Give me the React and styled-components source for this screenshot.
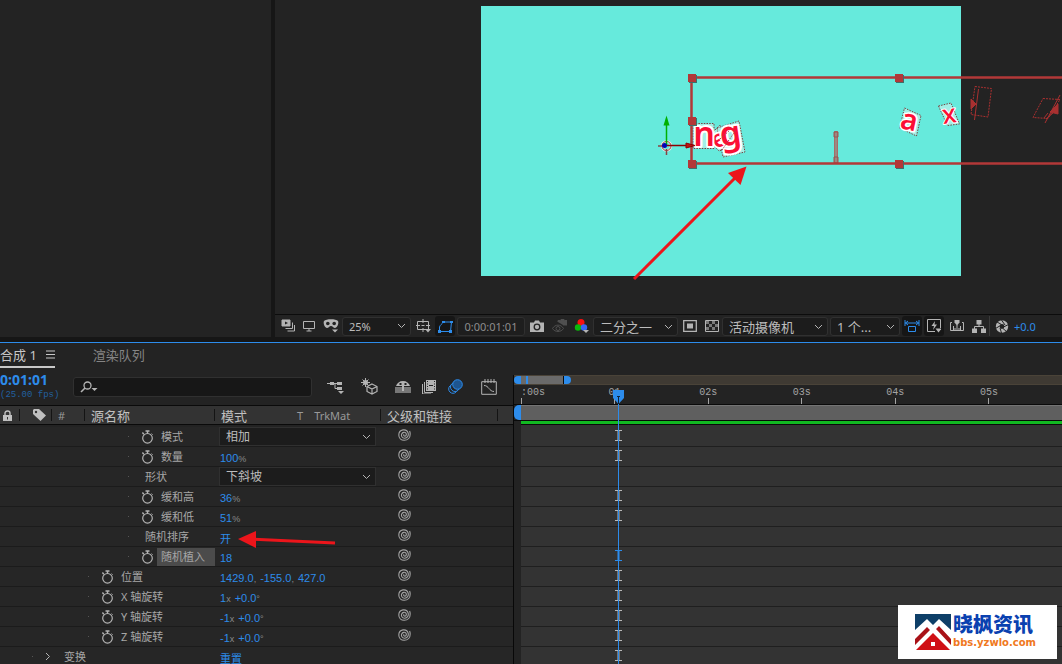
import React, { useState } from 'react';
import styled, { createGlobalStyle, css } from 'styled-components';

const GlobalStyle = createGlobalStyle`
  * {
    box-sizing: border-box;
  }
  body {
    margin: 0;
    background: #161616;
    color: #b4b4b4;
    font-family: "Noto Sans", "Noto Sans CJK SC", sans-serif;
    font-size: 11px;
    overflow: hidden;
  }
  button, input, select {
    font: inherit;
    color: inherit;
    border: 0;
    padding: 0;
    margin: 0;
    background: none;
  }
`;

const Page = styled.div`
  display: flex;
  flex-direction: column;
  height: 100vh;
  overflow: hidden;
`;

const TopArea = styled.div`
  display: grid;
  grid-template-columns: 271px minmax(0, 1fr);
  column-gap: 4px;
  flex: none;
  margin-bottom: 5px;
`;

const Panel = styled.section`
  background: #232323;
  min-width: 0;
`;

const Stage = styled.div`
  display: flex;
  overflow: hidden;
  border-bottom: 1px solid #0c0c0c;

  svg {
    flex: none;
  }
`;

const Toolbar = styled.div`
  display: flex;
  align-items: center;
  height: 22px;
  padding-left: 3px;
`;

const IconButton = styled.button`
  display: flex;
  align-items: center;
  justify-content: center;
  flex: none;
  width: ${p => p.$w || 24}px;
  height: 20px;
  color: ${p => (p.$on ? '#2d8ceb' : '#b4b4b4')};
  opacity: ${p => (p.$dim ? 0.3 : 1)};
  ${p => p.$boxed && css`
    background: #161616;
    border-radius: 3px;
    margin-right: 2px;
  `}
`;

const TimeField = styled.input`
  width: 68px;
  height: 19px;
  flex: none;
  text-align: center;
  color: #8d8d8d;
  background: #1e1e1e;
  border: 1px solid #303030;
  border-radius: 3px;
`;

const SelectBox = styled.span`
  display: grid;
  grid-template-columns: minmax(0, 1fr) 13px;
  align-items: center;
  flex: none;
  width: ${p => p.$w}px;
  height: ${p => p.$h || 19}px;
  margin-right: ${p => p.$mr || 0}px;
  background: #1c1c1c;
  border: 1px solid #303030;
  border-radius: ${p => (p.$h ? 0 : 3)}px;

  select {
    grid-area: 1 / 1 / 2 / 3;
    appearance: none;
    width: 100%;
    height: 100%;
    padding-left: 6px;
    font-size: ${p => p.$size || 13}px;
    color: #bcbcbc;
    outline: none;
  }
  svg {
    grid-area: 1 / 2;
    pointer-events: none;
  }
`;

const Divider = styled.span`
  width: 1px;
  height: 20px;
  background: #3a3a3a;
`;

const Exposure = styled.a`
  color: #2d8ceb;
  text-decoration: none;
`;

const Timeline = styled.section`
  display: grid;
  grid-template-columns: 513px minmax(0, 1fr);
  flex: 1;
  min-height: 0;
  position: relative;
  border-top: 1px solid #2d8ceb;
  background: #232323;
`;

const Outline = styled.div`
  display: flex;
  flex-direction: column;
  min-width: 0;
`;

const Tabs = styled.div`
  display: flex;
  height: 25px;
  font-size: 13px;
`;

const Tab = styled.button`
  display: flex;
  align-items: center;
  gap: 9px;
  white-space: nowrap;
  margin-right: 38px;
  color: ${p => (p.$active ? '#c8c8c8' : '#858585')};
  border-bottom: 2px solid ${p => (p.$active ? '#c8c8c8' : 'transparent')};
`;

const Controls = styled.div`
  display: flex;
  align-items: center;
  height: 37px;
`;

const Clock = styled.div`
  width: 73px;
  flex: none;
  line-height: 16px;
  font-size: 14px;
  font-weight: 700;
  color: #2d8ceb;
  white-space: nowrap;

  small {
    display: block;
    font: 9px/14px "Liberation Mono", monospace;
    color: #22609f;
  }
`;

const Search = styled.label`
  display: flex;
  align-items: center;
  flex: none;
  width: 239px;
  height: 20px;
  margin-right: 6px;
  padding-left: 6px;
  background: #171717;
  border: 1px solid #303030;
  border-radius: 3px;

  input {
    flex: 1;
    min-width: 0;
    outline: none;
  }
`;

const Head = styled.div`
  display: grid;
  grid-template-columns: 20px 32px 33px 130px 166px 117px 1fr;
  align-items: center;
  height: 20px;
  background: #333;
  border-top: 1px solid #0a0a0a;
  border-bottom: 1px solid #0a0a0a;
`;

const HeadCell = styled.div`
  display: flex;
  align-items: center;
  height: 12px;
  padding-left: ${p => p.$pad || 6}px;
  border-right: 1px solid #141414;
  font-size: 13px;
  color: #c0c0c0;
  white-space: nowrap;
`;

const HeadNote = styled.span`
  margin-left: ${p => p.$gap || 0}px;
  font-size: 11px;
  color: #999;
`;

const Rows = styled.div`
  padding-top: 1px;
  border-top: 1px solid #232323;
`;

const Row = styled.div`
  display: grid;
  grid-template-columns: 219px 161px 1fr;
  align-items: center;
  height: 20px;
  background: #262626;
  border-bottom: 1px solid #1b1b1b;
`;

const NameCell = styled.div`
  display: flex;
  align-items: center;
  padding-left: ${p => p.$indent}px;

  &::before {
    content: "";
    width: 1px;
    height: 1px;
    margin-right: 12px;
    background: #555;
  }
  svg {
    margin-right: 3px;
  }
`;

const Name = styled.span`
  line-height: 18px;
  padding: 0 ${p => (p.$selected ? 10 : 4)}px 0 4px;
  background: ${p => (p.$selected ? '#4b4b4b' : 'transparent')};
  color: #a6a6a6;
  white-space: nowrap;
`;

const Value = styled.button`
  justify-self: start;
  margin-left: 1px;
  padding-top: 2px;
  font: 11px "Liberation Sans", "Noto Sans CJK SC", sans-serif;
  color: #2d8ceb;
  white-space: nowrap;
  text-decoration: ${p => (p.$link ? 'underline' : 'none')};
`;

const Unit = styled.span`
  margin-right: ${p => (p.$gap ? 4 : 0)}px;
  font-size: 9px;
  color: #8a8a8a;
`;

const PickWhip = styled.button`
  display: flex;
  justify-self: start;
  margin-left: 18px;
  padding-bottom: 3px;
  color: #a4a4a4;
`;

const TimePane = styled.div`
  position: relative;
  min-width: 0;
  overflow: hidden;
  margin-top: 32px;
  border-left: 1px solid #080808;
`;

const Navigator = styled.div`
  display: flex;
  height: 10px;
  background: #3f3a33;
  border-top: 1px solid #4a4338;
  border-bottom: 1px solid #4a4338;
`;

const Grip = styled.span`
  width: 7px;
  background: #2d8ceb;
  border-radius: ${p => (p.$end ? '0 5px 5px 0' : '5px 0 0 5px')};
`;

const Thumb = styled.span`
  width: 43px;
  padding-left: 5px;
  background: #6a6a6a;
  border-right: 1px solid #0a0a0a;

  &::before {
    content: "";
    display: block;
    width: 2px;
    height: 100%;
    background: #2d8ceb;
  }
`;

const Ruler = styled.div`
  display: flex;
  height: 19px;
  padding-left: 7px;
  font: 10px "Liberation Mono", monospace;
  color: #a4a4a4;
`;

const Mark = styled.div`
  display: flex;
  flex-direction: column;
  align-items: ${p => (p.$first ? 'flex-start' : 'center')};
  justify-content: flex-end;
  flex: 0 0 ${p => (p.$first ? '8.65%' : '17.3%')};
  line-height: 11px;

  &::after {
    content: "";
    width: 1px;
    height: 6px;
    background: #a4a4a4;
  }
`;

const WorkArea = styled.div`
  display: flex;
  height: 17px;
  border-top: 1px solid #0a0a0a;
  border-bottom: 1px solid #0a0a0a;
`;

const WorkBar = styled.div`
  flex: 1;
  background: #5f5f5f;
  border-top: 1px solid #747474;
`;

const Cached = styled.div`
  height: 4px;
  margin-left: 7px;
  background: #12b922;
  border-bottom: 1px solid #0a0a0a;
`;

const Tracks = styled.div`
  margin-left: 7px;
  padding-top: 2px;
  background: #333;
`;

const Track = styled.div`
  display: flex;
  align-items: center;
  height: 20px;
  padding: 0 0 2px 94px;
  color: ${p => (p.$active ? '#2d8ceb' : '#b8b8b8')};
  border-bottom: 1px solid #1f1f1f;
`;

const Playhead = styled.div`
  position: absolute;
  left: 99px;
  top: 15px;
  bottom: 0;
  display: flex;
  flex-direction: column;
  align-items: center;
  width: 11px;

  &::after {
    content: "";
    flex: 1;
    width: 1px;
    background: #2d8ceb;
  }
`;

const Pointer = styled.svg`
  position: absolute;
  left: 236px;
  top: 186px;
`;

const Badge = styled.a`
  position: fixed;
  right: 5px;
  bottom: 5px;
  display: flex;
  align-items: center;
  gap: 2px;
  width: 159px;
  height: 54px;
  padding-left: 17px;
  background: #fff;
  text-decoration: none;
  white-space: nowrap;
`;

const BadgeText = styled.span`
  display: grid;
  grid-template-rows: 22px 16px;
  align-items: center;
`;

const BadgeName = styled.strong`
  font: 900 20px/20px "Noto Sans CJK SC", sans-serif;
  color: #0a41b0;
`;

const BadgeSite = styled.span`
  font: bold 10px/12px "DejaVu Sans", sans-serif;
  color: #f07820;
`;

const Icon = ({ w = 14, h = 14, children }) => (
  <svg width={w} height={h} viewBox={`0 0 ${w} ${h}`} fill="none" stroke="currentColor" aria-hidden="true">
    {children}
  </svg>
);

const Chevron = () => (
  <Icon w={9} h={6}><path d="M1 1l3.5 3.5L8 1" /></Icon>
);

const Stopwatch = () => (
  <Icon w={13} h={14}>
    <circle cx="6.5" cy="8.3" r="4.8" strokeWidth="1.2" />
    <path d="M6.5 3.5V1.2M4.5 1h4M1.4 2.5l1.4 1.7" strokeWidth="1.4" />
    <path d="M10.6 3.6l1 1" />
  </Icon>
);

const Spiral = () => (
  <Icon w={13} h={12}>
    <path
      d="M6.200 5.500c-.9.3-.6 1.600.4 1.600 1.500 0 2.200-1.600 1.400-2.800C7 2.800 4.500 3 3.700 5c-.8 2.300.8 4.300 3 4.200 2.600-.1 4-2.400 3.500-4.800C9.600 1.800 7.300.6 5 .9 2.500 1.300.8 3.500.8 6c0 3 2.300 5.300 5.400 5.300 3.800 0 6-2.800 6-6.300 0-1-.2-2-.6-3"
      strokeWidth="1.100"
    />
  </Icon>
);

const IBeam = () => (
  <Icon w={7} h={11}><path d="M0 .5h7M0 10.500h7M3.500 1v9" strokeWidth="1" /><path d="M3.500 1v9" strokeWidth="3" opacity=".5" /></Icon>
);

const Select = ({ label, options, size, ...box }) => (
  <SelectBox $size={size} {...box}>
    <select aria-label={label}>
      {options.map(o => <option key={o}>{o}</option>)}
    </select>
    <Chevron />
  </SelectBox>
);

function Composition() {
  const handles = [[692, 78], [899, 78], [692, 121], [692, 164], [899, 164]];
  return (
    <svg width="787" height="314" viewBox="275 0 787 314" role="img" aria-label="合成 1">
      <rect x="481" y="6" width="480" height="270" fill="#66eadc" />

      <g fill="#a4efe6" stroke="#75423f" strokeDasharray="1.500 1.200">
        <path d="M693 123.500h21v25h-21z" />
        <path d="M711 134l9-9 9 9-2 14-8 3-8-8z" />
        <path d="M717 128l22-7 6 31-22 5z" />
        <path d="M904.500 108l16.500 7.500-4.500 20.500-17-8z" />
        <path d="M938.500 106l12.500-3 8.500 21-12 1.500z" />
      </g>
      <g fill="#fb0f35" stroke="#fff" strokeWidth="4" strokeLinejoin="round" paintOrder="stroke" fontFamily="Noto Sans, sans-serif" fontWeight="600" textAnchor="middle">
        <text x="719" y="147" fontSize="24" transform="rotate(-30 719 140)">e</text>
        <text x="704" y="146" fontSize="34">n</text>
        <text x="731" y="145" fontSize="34" transform="rotate(-8 731 140)">g</text>
        <text x="909" y="130" fontSize="29" strokeWidth="3" transform="rotate(12 909 122)">a</text>
        <text x="949" y="123" fontSize="26" strokeWidth="2" fontWeight="500" transform="rotate(-8 949 114)">x</text>
      </g>
      <path d="M720 139l10-9M722 150l14-20" stroke="#a04a48" strokeDasharray="1.500 1.200" />

      <g stroke="#a93030" fill="none">
        <path d="M834.500 131.500h3v32h-3z" stroke="#a36f6a" fill="#9c8882" />
        <path d="M834 132h4v5h-4zM834 157h4v6h-4z" stroke="#9a5551" />
        <path d="M975 86.500l16.500 2-3.500 28.500-17-2.500z" strokeDasharray="2 1" />
        <path d="M978.500 89l-4 31" />
        <path d="M971 99l5 5-5 5z" fill="#a93030" />
        <path d="M1043 98.500l17 1-12 19-15-1z" strokeDasharray="2 1" />
        <path d="M1060 95l-15 28M1046 119l7-6M1048 113l-4 5" />
        <path d="M1050 112l8-8v10z" fill="#a93030" />
      </g>

      <path d="M1062 77.500H691.500v86H1062" fill="none" stroke="#b23838" strokeWidth="2.500" />
      {handles.map(([x, y]) => (
        <g key={`${x}-${y}`}>
          <rect x={x - 3} y={y - 3} width="8" height="8" fill="#3f6e6a" />
          <rect x={x - 4} y={y - 4} width="8" height="8" fill="#b23838" />
        </g>
      ))}

      <circle cx="666.500" cy="146" r="4.500" fill="none" stroke="#f5e5e5" strokeWidth="2.500" />
      <circle cx="666.500" cy="146" r="4.500" fill="none" stroke="#844" />
      <path d="M658 146h5M666.500 149v6" stroke="#844" strokeWidth="1.500" />
      <path d="M666.500 145v-22" stroke="#00b000" strokeWidth="1.500" />
      <path d="M666.500 115.500l3 10h-6z" fill="#00b000" />
      <path d="M667 145.500h20" stroke="#8c0000" strokeWidth="1.500" />
      <path d="M686 143l9 2.500-9 2.500z" fill="#c01010" stroke="#8c0000" />
      <circle cx="664.500" cy="145.500" r="2.500" fill="#0000b8" />

      <path d="M634 279l102-102" stroke="#ec151b" strokeWidth="3" />
      <path d="M746.500 166.500l-6 18.500-12.500-12z" fill="#ec151b" />
    </svg>
  );
}

function ViewerToolbar() {
  return (
    <Toolbar>
      <IconButton $w={19} aria-label="始终预览此视图">
        <Icon>
          <path d="M1 1h8v6H1z" fill="currentColor" />
          <path d="M11.500 3.500v6h-7M13.500 6v6h-7" />
          <path d="M4 2.500L7 4 4 5.500z" fill="#222" stroke="none" />
        </Icon>
      </IconButton>
      <IconButton $w={23} aria-label="主查看器">
        <Icon w={12} h={12}><path d="M.5 1.500h11v7H.5zM6 9v2M3.500 11h5" /></Icon>
      </IconButton>
      <IconButton $w={22} aria-label="VR">
        <Icon w={16} h={14}>
          <path d="M1 2c2-2.500 12-2.500 14 0 1 2-.5 7-3 7-1.500 0-2.500-2-4-2S5.500 9 4 9C1.500 9 0 4 1 2z" fill="currentColor" stroke="none" />
          <circle cx="4.800" cy="4.500" r="1.800" fill="#222" stroke="none" />
          <circle cx="11.200" cy="4.500" r="1.800" fill="#222" stroke="none" />
          <path d="M9 10.500h6l-3 3z" fill="currentColor" stroke="none" />
        </Icon>
      </IconButton>
      <Select label="放大率" options={['25%', '50%', '100%']} $w={69} size={11} />
      <IconButton aria-label="网格和参考线">
        <Icon w={15}>
          <path d="M1.500 2.500h11v8h-11zM7 0v4M7 9v4M0 6.500h4M10 6.500h4M5.500 6.500h3" />
          <path d="M9 10h6l-3 3.500z" fill="currentColor" stroke="none" />
        </Icon>
      </IconButton>
      <IconButton $w={20} $boxed $on aria-label="切换蒙版">
        <Icon w={15} h={13}>
          <path d="M1.500 11.500V7C2 5 4 4 5.500 2h8l-1 9.500z" />
          <path d="M0 10h3v3H0zM4 1h3v2H4zM12 1h3v2h-3zM11 10h3v3h-3z" fill="currentColor" stroke="none" />
        </Icon>
      </IconButton>
      <TimeField aria-label="当前时间" defaultValue="0:00:01:01" />
      <IconButton aria-label="拍摄快照">
        <Icon w={14} h={12}>
          <path d="M0 2.500h4L5 .5h4l1 2h4V12H0z" fill="currentColor" stroke="none" />
          <circle cx="7" cy="7" r="2.800" stroke="#232323" strokeWidth="1.300" />
        </Icon>
      </IconButton>
      <IconButton $w={20} $dim aria-label="显示快照">
        <Icon w={15}>
          <path d="M6 3V1.500h2L9 .5h3l1 1h2V6h-4" fill="currentColor" />
          <path d="M.5 9.500C3 5 9 5 11.500 9.500 9 13.500 3 13.500.5 9.500z" />
          <circle cx="6" cy="9.500" r="2" />
        </Icon>
      </IconButton>
      <IconButton aria-label="显示通道">
        <Icon w={15}>
          <g stroke="none">
            <circle cx="7" cy="3.500" r="3.500" fill="#fa0f0f" />
            <circle cx="4" cy="8.500" r="3.200" fill="#0ab80a" />
            <circle cx="10" cy="8.500" r="3.200" fill="#3a66f5" />
            <path d="M9 11h6l-3 3z" fill="currentColor" />
          </g>
        </Icon>
      </IconButton>
      <Select label="分辨率" options={['二分之一', '完整']} $w={85} />
      <IconButton aria-label="目标区域">
        <Icon h={12}><path d="M.7.7h12.600v10.600H.7z" strokeWidth="1.300" /><path d="M4 3.500h6v5H4z" fill="currentColor" stroke="none" /></Icon>
      </IconButton>
      <IconButton $w={20} aria-label="透明网格">
        <Icon h={12}>
          <path d="M.5.5h13v11H.5z" />
          <path d="M1 1h3v3H1zM7 1h3v3H7zM4 4h3v3H4zM10 4h3v3h-3zM1 7h3v3H1zM7 7h3v3H7z" fill="currentColor" stroke="none" opacity=".6" />
        </Icon>
      </IconButton>
      <Select label="3D 视图" options={['活动摄像机', '正面']} $w={106} $mr={2} />
      <Select label="视图布局" options={['1 个...', '2 个...']} $w={70} $mr={2} />
      <IconButton $w={20} $boxed $on aria-label="像素长宽比校正">
        <Icon w={16} h={13}>
          <path d="M1 0v6M15 0v6M1 3h14M4 1L1.500 3 4 5M12 1l2.500 2L12 5M4.500 6.500h7v5h-7z" />
        </Icon>
      </IconButton>
      <IconButton $w={20} $boxed aria-label="快速预览">
        <Icon>
          <path d="M8 12.500H.5V.5h13V9" />
          <path d="M8 2L4.500 7H7l-1 4 4-5.500H7.500z" fill="currentColor" stroke="none" />
          <path d="M8.500 9.500h6l-3 4z" fill="currentColor" stroke="none" />
        </Icon>
      </IconButton>
      <IconButton $w={22} aria-label="时间轴">
        <Icon h={12}><path d="M2 2.500H.5v8h13v-8H12M3.500 6v4M10.500 6v4M7 5v5M5 8v2M9 8v2" /><path d="M4.500 0h5v2.500L7 5.500 4.500 2.500z" fill="currentColor" stroke="none" /></Icon>
      </IconButton>
      <IconButton $w={21} aria-label="合成流程图">
        <Icon h={13}>
          <path d="M7 4v3M2.500 9V6.500h9V9" />
          <path d="M4.500 0h5v4.500h-5zM0 8.500h5V13H0zM9 8.500h5V13H9z" fill="currentColor" stroke="none" />
        </Icon>
      </IconButton>
      <Divider />
      <IconButton aria-label="重置曝光度">
        <Icon h={13}>
          <circle cx="7" cy="6.500" r="4.300" strokeWidth="3.800" />
          <path d="M6.500 0l3.500 5M13.500 4.500L8.500 7M12 12L8 8.500M6.500 13L5 8M.5 8.500l5-3M2 2l4.500 2.500" stroke="#232323" />
        </Icon>
      </IconButton>
      <Exposure href="#exposure">+0.0</Exposure>
    </Toolbar>
  );
}

const rotation = turns => <>{turns}<Unit $gap>x</Unit>+0.0<Unit>°</Unit></>;

const rows = [
  { name: '模式', indent: 128, watch: true, select: ['相加', '相减'], key: true },
  { name: '数量', indent: 128, watch: true, value: <>100<Unit>%</Unit></>, key: true },
  { name: '形状', indent: 128, select: ['下斜坡', '上斜坡'] },
  { name: '缓和高', indent: 128, watch: true, value: <>36<Unit>%</Unit></>, key: true },
  { name: '缓和低', indent: 128, watch: true, value: <>51<Unit>%</Unit></>, key: true },
  { name: '随机排序', indent: 128, value: '开' },
  { name: '随机植入', indent: 128, watch: true, value: '18', key: true, selected: true },
  { name: '位置', indent: 88, watch: true, value: <>1429.0<Unit $gap>,</Unit>-155.0<Unit $gap>,</Unit>427.0</>, key: true },
  { name: 'X 轴旋转', indent: 88, watch: true, value: rotation('1'), key: true },
  { name: 'Y 轴旋转', indent: 88, watch: true, value: rotation('-1'), key: true },
  { name: 'Z 轴旋转', indent: 88, watch: true, value: rotation('-1'), key: true },
  { name: '变换', indent: 32, group: true, value: '重置', link: true, key: true },
];

function LayerControls() {
  return (
    <>
      <IconButton $w={34} aria-label="合成微型流程图">
        <Icon w={17}>
          <path d="M0 3.500h8M8 3.500v5h3M8 3.500h3" />
          <path d="M3 2h4v3H3zM10 2h5v3h-5zM10 7h5v3h-5zM11 11h6l-3 3z" fill="currentColor" stroke="none" />
        </Icon>
      </IconButton>
      <IconButton $w={34} aria-label="草图 3D">
        <Icon w={17} h={17}>
          <path d="M4.500 0v9M0 4.500h9M1.500 1.500l6 6M7.500 1.500l-6 6" />
          <circle cx="4.500" cy="4.500" r="2.500" fill="currentColor" stroke="none" />
          <path d="M11 6l5 2.500v5L11 16l-5-2.500v-5zM6 8.500l5 2.500 5-2.500M11 11v5" strokeWidth="1.200" />
        </Icon>
      </IconButton>
      <IconButton $w={34} aria-label="隐藏隐蔽图层">
        <Icon w={16} h={13}>
          <path d="M0 7h16v6H0z" fill="#777" stroke="none" />
          <path d="M1 6c1-3 3.500-5 7-5s6 2 7 5z" fill="currentColor" stroke="none" />
          <path d="M4.500 3h2v2h-2zM9.500 3h2v2h-2z" fill="#232323" stroke="none" />
          <path d="M8 5v6" strokeWidth="2" />
        </Icon>
      </IconButton>
      <IconButton $w={18} aria-label="帧混合">
        <Icon>
          <path d="M4 0h10v11H4z" fill="currentColor" stroke="none" />
          <path d="M2.500 2v10.500H11M.5 4v10H9" />
          <path d="M5.500 1v9M12.500 1v9" stroke="#232323" strokeDasharray="1 1.500" />
          <path d="M7 5.500h4" stroke="#232323" />
        </Icon>
      </IconButton>
      <IconButton $w={34} $on aria-label="运动模糊">
        <Icon w={15} h={15}>
          <circle cx="5" cy="10" r="4.300" />
          <circle cx="7" cy="8" r="4.500" fill="#232323" />
          <circle cx="9.500" cy="5.500" r="4.800" fill="#1e558f" />
        </Icon>
      </IconButton>
      <IconButton $w={34} aria-label="图表编辑器">
        <Icon w={16} h={16}>
          <path d="M.7 2.700h14.600v12.600H.7zM4 0v4M7 0v4M10 0v4M13 0v4" />
          <path d="M3 6.500c5 0 5 6 10 6" />
        </Icon>
      </IconButton>
    </>
  );
}

function App() {
  const [query, setQuery] = useState('');
  const seconds = ['01', '02s', '03s', '04s', '05s'];

  return (
    <>
      <GlobalStyle />
      <Page>
        <TopArea>
          <Panel />
          <Panel>
            <Stage><Composition /></Stage>
            <ViewerToolbar />
          </Panel>
        </TopArea>

        <Timeline>
          <Outline>
            <Tabs>
              <Tab $active>
                合成 1
                <Icon w={9} h={9}><path d="M0 1h9M0 4.500h9M0 8h9" /></Icon>
              </Tab>
              <Tab>渲染队列</Tab>
            </Tabs>
            <Controls>
              <Clock>0:01:01<small>(25.00 fps)</small></Clock>
              <Search>
                <Icon w={18} h={12}>
                  <circle cx="7.500" cy="4.500" r="3.500" strokeWidth="1.300" />
                  <path d="M5 7l-4 4" strokeWidth="1.600" />
                  <path d="M11.500 7h6l-3 3z" fill="currentColor" stroke="none" />
                </Icon>
                <input aria-label="搜索" value={query} onChange={e => setQuery(e.target.value)} />
              </Search>
              <LayerControls />
            </Controls>
            <Head>
              <HeadCell $pad={3}>
                <Icon w={9} h={11}>
                  <path d="M2 5V3a2.500 2 0 0 1 5 0v2" strokeWidth="1.400" />
                  <path d="M0 5h9v6H0z" fill="currentColor" stroke="none" />
                  <path d="M4.500 7v2.500" stroke="#333" />
                </Icon>
              </HeadCell>
              <HeadCell $pad={13}>
                <Icon w={13} h={12}>
                  <path d="M0 1l1-1h5l7 6.500L7.500 12 0 5z" fill="currentColor" stroke="none" />
                  <circle cx="3" cy="3" r="1.200" fill="#333" stroke="none" />
                </Icon>
              </HeadCell>
              <HeadCell><HeadNote>#</HeadNote></HeadCell>
              <HeadCell>源名称</HeadCell>
              <HeadCell>
                模式
                <HeadNote $gap={50}>T</HeadNote>
                <HeadNote $gap={11}>TrkMat</HeadNote>
              </HeadCell>
              <HeadCell>父级和链接</HeadCell>
            </Head>
            <Rows>
              {rows.map(row => (
                <Row key={row.name}>
                  <NameCell $indent={row.indent}>
                    {row.watch && <Stopwatch />}
                    {row.group && <Icon w={12} h={9}><path d="M1 1l3.500 3.500L1 8" /></Icon>}
                    <Name $selected={row.selected}>{row.name}</Name>
                  </NameCell>
                  {row.select
                    ? <Select label={row.name} options={row.select} $w={157} $h={19} size={12} />
                    : <Value $link={row.link}>{row.value}</Value>}
                  {!row.group && <PickWhip aria-label="父级关联器"><Spiral /></PickWhip>}
                </Row>
              ))}
            </Rows>
          </Outline>

          <TimePane>
            <Navigator>
              <Grip />
              <Thumb />
              <Grip $end />
            </Navigator>
            <Ruler>
              <Mark $first>:00s</Mark>
              {seconds.map(s => <Mark key={s}>{s}</Mark>)}
            </Ruler>
            <WorkArea>
              <Grip />
              <WorkBar />
            </WorkArea>
            <Cached />
            <Tracks>
              {rows.map(row => (
                <Track key={row.name} $active={row.selected}>
                  {row.key && <IBeam />}
                </Track>
              ))}
            </Tracks>
            <Playhead>
              <svg width="11" height="14" viewBox="0 0 11 14" aria-hidden="true">
                <path d="M0 0h11v8l-5.500 6L0 8z" fill="#2d8ceb" />
                <path d="M4 6.500h3M5.500 7v7" stroke="#10253c" />
              </svg>
            </Playhead>
          </TimePane>

          <Pointer width="100" height="20" viewBox="0 0 100 20" aria-hidden="true">
            <path d="M14 10l85 4" stroke="#ec151b" strokeWidth="3" />
            <path d="M2 10l18-8v17z" fill="#ec151b" />
          </Pointer>
        </Timeline>

        <Badge href="#bbs">
          <svg width="36" height="36" viewBox="0 0 36 36" aria-hidden="true">
            <path d="M0 0h36v16L24 5l-6 6-6-6L0 16z" fill="#0e3f68" />
            <path d="M0 25L12 13l3 3L0 31zM21 15l3-3 12 13v6z" fill="#a81218" />
            <path d="M1 36l17-17 17 17z" fill="#d01016" />
            <path d="M16 28h4v4h-4z" fill="#fff" />
          </svg>
          <BadgeText>
            <BadgeName>晓枫资讯</BadgeName>
            <BadgeSite>bbs.yzwlo.com</BadgeSite>
          </BadgeText>
        </Badge>
      </Page>
    </>
  );
}

export default App;
